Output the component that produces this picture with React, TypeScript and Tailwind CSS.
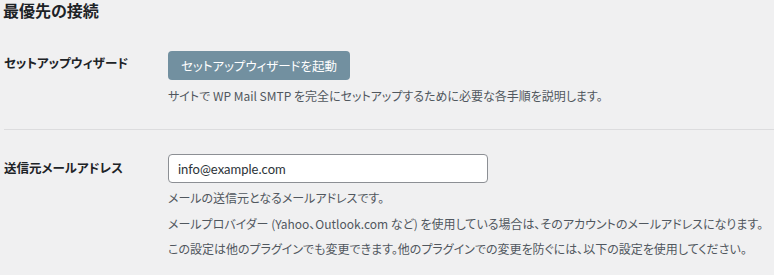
export default function App() {
  const font = "font-['Noto_Sans_CJK_JP','Noto_Sans',sans-serif] [font-feature-settings:'palt']";
  return (
    <div className={`min-h-[275px] w-[774px] bg-[#f0f0f1] text-[#1d2327] ${font}`}>
      <h2 className="pl-[3px] pt-[1px] text-[16px] font-bold leading-[18px]">最優先の接続</h2>

      <div className="mt-[32px] flex">
        <div className="w-[168px] shrink-0 pl-[4px] pt-[2px] text-[12.5px] font-bold leading-[20px]">セットアップウィザード</div>
        <div>
          <button className="h-[29px] rounded-[4px] bg-[#7290a0] px-[13px] text-[12.5px] leading-[29px] text-white">
            セットアップウィザードを起動
          </button>
          <p className="mt-[6px] text-[12px] leading-[20px] text-[#50575e]">
            サイトで WP Mail SMTP を完全にセットアップするために必要な各手順を説明します。
          </p>
        </div>
      </div>

      <div className="ml-[4px] mt-[23px] border-t border-[#dcdcde]" />

      <div className="mt-[24px] flex">
        <div className="w-[168px] shrink-0 pl-[4px] pt-[4px] text-[12.5px] font-bold leading-[20px]">送信元メールアドレス</div>
        <div>
          <input
            defaultValue="info@example.com"
            className="h-[29px] w-[320px] rounded-[4px] border border-[#8c8f94] bg-white px-[9px] font-['Lato',sans-serif] text-[13px] text-[#2c3338] outline-none"
          />
          <p className="mt-[5px] text-[12px] leading-[20px] text-[#50575e]">メールの送信元となるメールアドレスです。</p>
          <p className="mt-[6px] whitespace-nowrap text-[12px] leading-[20px] text-[#50575e]">
            メールプロバイダー (Yahoo、Outlook.com など) を使用している場合は、そのアカウントのメールアドレスになります。
          </p>
          <p className="mt-[5px] whitespace-nowrap text-[12px] leading-[20px] text-[#50575e]">
            この設定は他のプラグインでも変更できます。他のプラグインでの変更を防ぐには、以下の設定を使用してください。
          </p>
        </div>
      </div>
    </div>
  );
}
